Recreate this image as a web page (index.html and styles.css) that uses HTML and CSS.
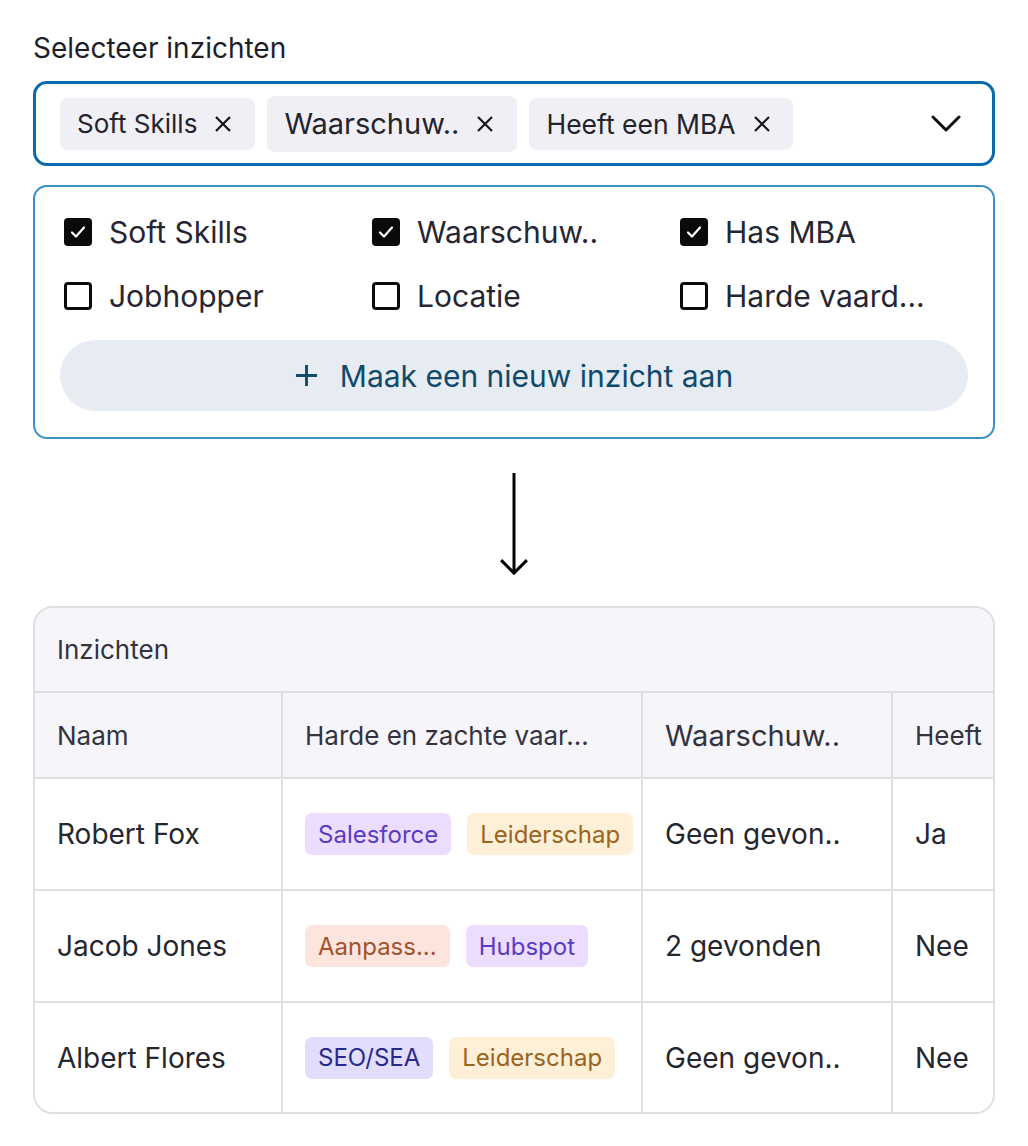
FILE: index.html
```html
<!DOCTYPE html>
<html lang="nl">
<head>
<meta charset="utf-8">
<title>Selecteer inzichten</title>
<link rel="stylesheet" href="styles.css">
</head>
<body>
<div class="page">
  <div class="label">Selecteer inzichten</div>

  <div class="select">
    <span class="chip"><span class="chip-text">Soft Skills</span>
      <svg class="x" viewBox="0 0 18 18"><path d="M2 2 L16 16 M16 2 L2 16"/></svg></span>
    <span class="chip chip-lg"><span class="chip-text">Waarschuw..</span>
      <svg class="x" viewBox="0 0 18 18"><path d="M2 2 L16 16 M16 2 L2 16"/></svg></span>
    <span class="chip chip-c"><span class="chip-text">Heeft een MBA</span>
      <svg class="x" viewBox="0 0 18 18"><path d="M2 2 L16 16 M16 2 L2 16"/></svg></span>
    <svg class="chevron" viewBox="0 0 30 18"><path d="M2 2 L15 15 L28 2"/></svg>
  </div>

  <div class="panel">
    <div class="options">
      <div class="opt"><span class="cb on"><svg viewBox="0 0 28 28"><path d="M8 14.5 L12 18.5 L20 9.5"/></svg></span>Soft Skills</div>
      <div class="opt"><span class="cb on"><svg viewBox="0 0 28 28"><path d="M8 14.5 L12 18.5 L20 9.5"/></svg></span>Waarschuw..</div>
      <div class="opt"><span class="cb on"><svg viewBox="0 0 28 28"><path d="M8 14.5 L12 18.5 L20 9.5"/></svg></span>Has MBA</div>
      <div class="opt"><span class="cb"></span>Jobhopper</div>
      <div class="opt"><span class="cb"></span>Locatie</div>
      <div class="opt"><span class="cb"></span>Harde vaard...</div>
    </div>
    <button class="new-btn">
      <svg class="plus" viewBox="0 0 24 24"><path d="M12 1 V23 M1 12 H23"/></svg>
      <span>Maak een nieuw inzicht aan</span>
    </button>
  </div>

  <div class="arrow-wrap">
    <svg class="arrow" viewBox="0 0 30 104"><path d="M15 0 V101 M2 88 L15 101 L28 88"/></svg>
  </div>

  <div class="card">
    <div class="card-title">Inzichten</div>
    <div class="table-wrap">
      <table class="grid">
        <colgroup>
          <col class="c1"><col class="c2"><col class="c3"><col class="c4">
        </colgroup>
        <thead>
          <tr>
            <th>Naam</th>
            <th>Harde en zachte vaar...</th>
            <th class="th-lg">Waarschuw..</th>
            <th>Heeft</th>
          </tr>
        </thead>
        <tbody>
          <tr>
            <td>Robert Fox</td>
            <td><div class="tags"><span class="tag purple">Salesforce</span><span class="tag amber">Leiderschap</span></div></td>
            <td>Geen gevon..</td>
            <td>Ja</td>
          </tr>
          <tr>
            <td>Jacob Jones</td>
            <td><div class="tags"><span class="tag peach">Aanpass...</span><span class="tag purple">Hubspot</span></div></td>
            <td>2 gevonden</td>
            <td>Nee</td>
          </tr>
          <tr>
            <td>Albert Flores</td>
            <td><div class="tags"><span class="tag indigo">SEO/SEA</span><span class="tag amber">Leiderschap</span></div></td>
            <td>Geen gevon..</td>
            <td>Nee</td>
          </tr>
        </tbody>
      </table>
    </div>
  </div>
</div>
</body>
</html>
```

FILE: styles.css
```css
* { box-sizing: border-box; }

html, body {
  margin: 0;
  background: #ffffff;
}

body {
  font-family: Inter, "Noto Sans", sans-serif;
  color: #25252f;
}

.page {
  width: 1028px;
  padding: 31px 33px 0 33px;
}

.label {
  font-size: 28px;
  line-height: 34px;
  color: #1e1e28;
  margin-bottom: 16px;
}

/* select box */
.select {
  height: 85px;
  border: 3px solid #0b6aae;
  border-radius: 14px;
  display: flex;
  align-items: center;
  gap: 12px;
  padding: 0 31px 0 24px;
}

.chip {
  display: inline-flex;
  align-items: center;
  height: 52px;
  padding: 0 23px 0 17px;
  background: #f0eff5;
  border-radius: 8px;
  font-size: 26px;
  color: #23232c;
}

.chip-lg {
  height: 56px;
  font-size: 29px;
}

.chip-c {
  font-size: 26.5px;
  padding-right: 22px;
}

.x {
  width: 18px;
  height: 18px;
  margin-left: 17px;
  fill: none;
  stroke: #15151c;
  stroke-width: 2.2;
}

.chevron {
  margin-left: auto;
  width: 30px;
  height: 18px;
  fill: none;
  stroke: #0f0f14;
  stroke-width: 3;
  stroke-linecap: round;
  stroke-linejoin: round;
}

/* options panel */
.panel {
  margin-top: 19px;
  border: 2px solid #3a91c5;
  border-radius: 14px;
  padding: 13px 25px 26px 25px;
}

.options {
  display: grid;
  grid-template-columns: repeat(3, 308px);
  grid-auto-rows: 64px;
  padding-left: 4px;
  margin-bottom: 12px;
}

.opt {
  display: flex;
  align-items: center;
  font-size: 30px;
  color: #262633;
}

.cb {
  width: 28px;
  height: 28px;
  border: 3px solid #0a0a0d;
  border-radius: 4px;
  margin-right: 17px;
  flex: none;
  display: flex;
  align-items: center;
  justify-content: center;
  background: #fff;
}

.cb.on {
  background: #0a0a0d;
  border: none;
}

.cb svg {
  width: 28px;
  height: 28px;
  fill: none;
  stroke: #ffffff;
  stroke-width: 2.2;
  stroke-linecap: round;
  stroke-linejoin: round;
}

.new-btn {
  width: 100%;
  height: 71px;
  border: none;
  border-radius: 36px;
  background: #e6ecf2;
  display: flex;
  align-items: center;
  justify-content: center;
  gap: 22px;
  font-family: Inter, "Noto Sans", sans-serif;
  font-size: 30px;
  color: #0f4a6b;
  padding: 0;
}

.plus {
  width: 23px;
  height: 23px;
  fill: none;
  stroke: #0f4a6b;
  stroke-width: 3;
}

/* arrow */
.arrow-wrap {
  display: flex;
  justify-content: center;
  padding: 34px 0 30px 0;
}

.arrow {
  width: 30px;
  height: 103px;
  fill: none;
  stroke: #000;
  stroke-width: 3;
}

/* table card */
.card {
  border: 2px solid #dfdee3;
  border-radius: 20px;
  overflow: hidden;
}

.card-title {
  height: 85px;
  display: flex;
  align-items: center;
  padding-left: 22px;
  background: #f6f5f9;
  font-size: 26px;
  color: #33333f;
  border-bottom: 2px solid #dfdee3;
}

.table-wrap {
  overflow: hidden;
}

.grid {
  border-collapse: collapse;
  table-layout: fixed;
  width: 1060px;
}

.c1 { width: 247px; }
.c2 { width: 360px; }
.c3 { width: 250px; }
.c4 { width: 203px; }

.grid th,
.grid td {
  text-align: left;
  vertical-align: middle;
  padding: 0 0 0 22px;
  border-right: 2px solid #dfdee3;
  white-space: nowrap;
  overflow: hidden;
}

.grid th {
  height: 85px;
  background: #f6f5f9;
  font-weight: 400;
  font-size: 26px;
  color: #33333f;
  border-bottom: 2px solid #dfdee3;
}

.grid th.th-lg {
  font-size: 29px;
}

.grid td {
  height: 112px;
  font-size: 28px;
  color: #26262f;
  background: #ffffff;
  border-bottom: 2px solid #dfdee3;
}

.grid tbody tr:last-child td {
  border-bottom: none;
  height: 110px;
}

.tags {
  display: flex;
  gap: 16px;
}

.tag {
  display: inline-flex;
  align-items: center;
  height: 42px;
  padding: 0 13px;
  border-radius: 7px;
  font-size: 24px;
}

.purple { background: #ecdcfd; color: #5a3cc2; }
.amber  { background: #fef0d6; color: #9a6422; }
.peach  { background: #fde5dd; color: #a2522e; }
.indigo { background: #e1ddfa; color: #2a298c; }
```
